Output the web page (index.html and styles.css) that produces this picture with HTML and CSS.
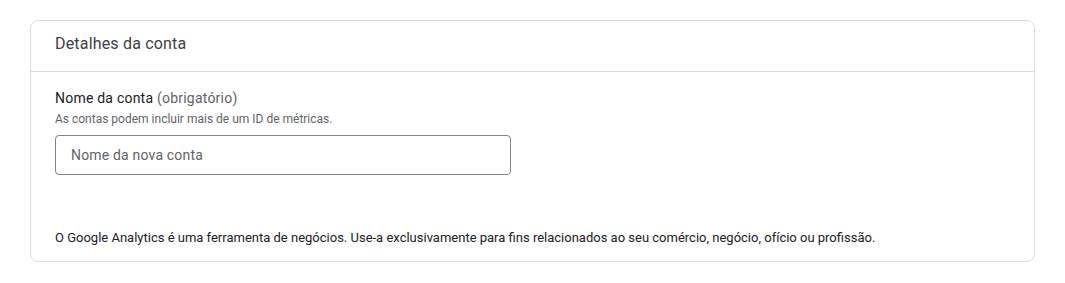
FILE: index.html
```html
<!DOCTYPE html>
<html lang="pt">
<head>
<meta charset="utf-8">
<title>Detalhes da conta</title>
<link rel="stylesheet" href="styles.css">
</head>
<body>
<section class="card">
  <header class="card-header">
    <h2 class="card-title">Detalhes da conta</h2>
  </header>
  <div class="card-body">
    <div class="field">
      <label class="field-label" for="account-name">Nome da conta <span class="field-optional">(obrigatório)</span></label>
      <div class="field-hint">As contas podem incluir mais de um ID de métricas.</div>
      <input class="text-input" id="account-name" type="text" placeholder="Nome da nova conta">
    </div>
    <p class="notice">O Google Analytics é uma ferramenta de negócios. Use-a exclusivamente para fins relacionados ao seu comércio, negócio, ofício ou profissão.</p>
  </div>
</section>
</body>
</html>
```

FILE: styles.css
```css
* { box-sizing: border-box; }
html, body { margin: 0; background: #ffffff; }
body {
  padding: 20px 30px;
  font-family: Roboto, "Liberation Sans", Arial, sans-serif;
  color: #202124;
}
.card {
  border: 1px solid #dadce0;
  border-radius: 8px;
  background: #fff;
}
.card-header {
  height: 51px;
  display: flex;
  align-items: center;
  padding: 0 24px 4px;
  border-bottom: 1px solid #dadce0;
}
.card-title {
  margin: 0;
  font-size: 16px;
  font-weight: 400;
  line-height: 24px;
  letter-spacing: 0.18px;
  color: #3c4043;
}
.card-body {
  padding: 16px 24px 15px;
}
.field {
  display: flex;
  flex-direction: column;
  align-items: flex-start;
}
.field-label {
  font-size: 14px;
  line-height: 20px;
  letter-spacing: 0.22px;
  color: #202124;
}
.field-optional { color: #5f6368; }
.field-hint {
  margin-top: 3px;
  font-size: 12px;
  line-height: 16px;
  color: #5f6368;
}
.text-input {
  margin-top: 8px;
  width: 456px;
  height: 40px;
  padding: 0 15px;
  border: 1px solid #80868b;
  border-radius: 4px;
  font-family: inherit;
  font-size: 14px;
  letter-spacing: 0.18px;
  color: #202124;
  outline: none;
}
.text-input::placeholder { color: #5f6368; opacity: 1; }
.notice {
  margin: 55px 0 0;
  font-size: 13px;
  line-height: 16px;
  color: #202124;
}
```
